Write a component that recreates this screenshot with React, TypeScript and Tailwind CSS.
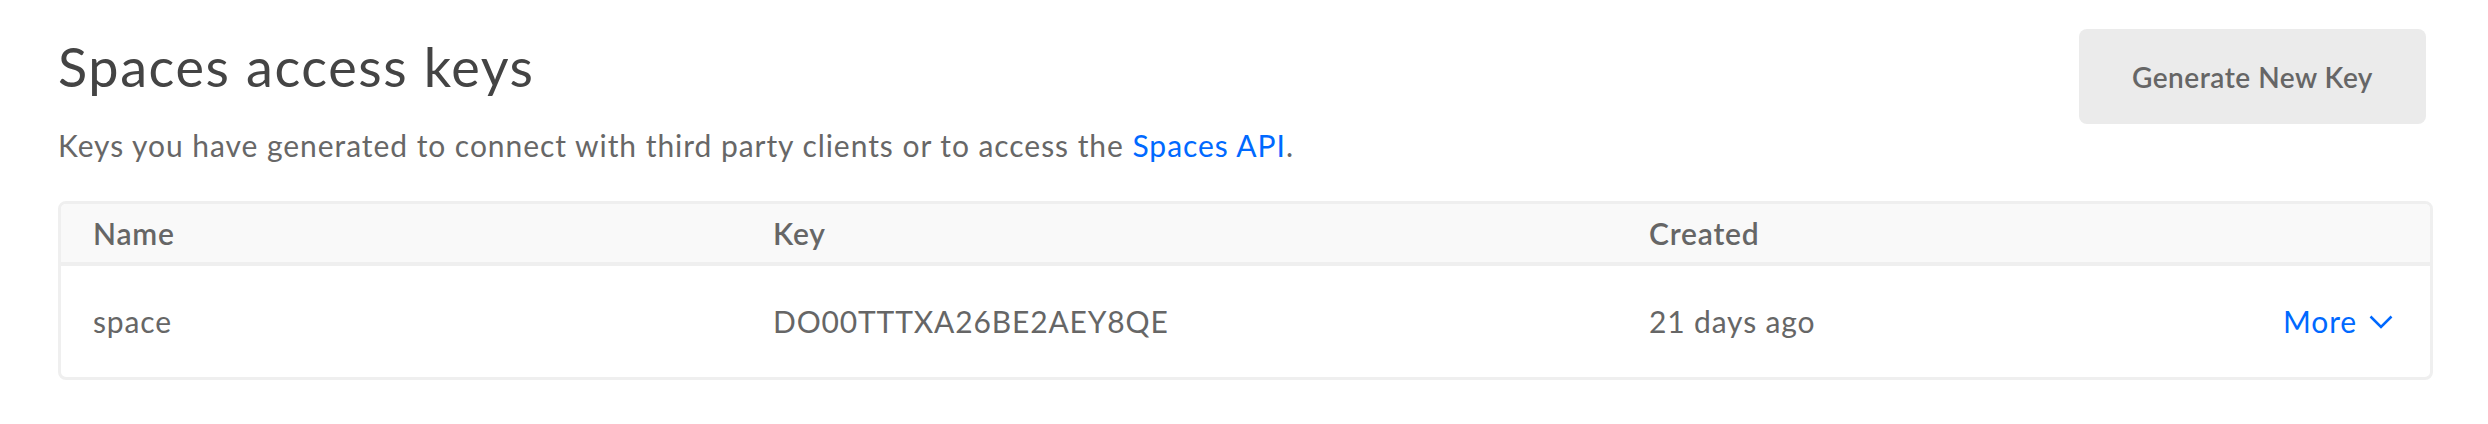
import React from "react";

const rows = [{ name: "space", key: "DO00TTTXA26BE2AEY8QE", created: "21 days ago" }];

export default function App() {
  return (
    <div className="min-h-[424px] w-full bg-white pl-[58px] pr-[55px] pt-[29px] font-['Lato',sans-serif]">
      <div className="flex justify-between">
        <div>
          <h1 className="mt-[11px] text-[54px] leading-none font-normal tracking-[1.6px] text-[#444444]">
            Spaces access keys
          </h1>
          <p className="mt-[36px] text-[30px] leading-none tracking-[0.95px] text-[#676767]">
            Keys you have generated to connect with third party clients or to access the{" "}
            <a href="#" className="text-[#0069ff]">
              Spaces API
            </a>
            .
          </p>
        </div>
        <button className="mr-[7px] h-[95px] w-[347px] rounded-[8px] bg-[#ebebeb] text-[28px] font-semibold tracking-[0.5px] text-[#666666]">
          Generate New Key
        </button>
      </div>

      <div className="mt-[41px] overflow-hidden rounded-[8px] border-[3px] border-[#efefef]">
        <div className="grid h-[62px] grid-cols-[680px_876px_1fr] items-center border-b-[4px] border-[#efefef] bg-[#f9f9f9] text-[30px] font-semibold tracking-[0.8px] text-[#666666]">
          <div className="pl-[32px]">Name</div>
          <div className="pl-[32px]">Key</div>
          <div className="pl-[32px]">Created</div>
        </div>
        {rows.map((r) => (
          <div
            key={r.key}
            className="grid h-[111px] grid-cols-[680px_876px_1fr_auto] items-center text-[30px] tracking-[0.85px] text-[#666666]"
          >
            <div className="pl-[32px]">{r.name}</div>
            <div className="pl-[32px]">{r.key}</div>
            <div className="pl-[32px]">{r.created}</div>
            <button className="flex items-center gap-[12px] pr-[37px] text-[30px] tracking-[0.85px] text-[#0069ff]">
              More
              <svg width="24" height="14" viewBox="0 0 24 14" fill="none">
                <polyline points="1.5,1.5 12,12 22.5,1.5" stroke="#0069ff" strokeWidth="2.5" />
              </svg>
            </button>
          </div>
        ))}
      </div>
    </div>
  );
}
